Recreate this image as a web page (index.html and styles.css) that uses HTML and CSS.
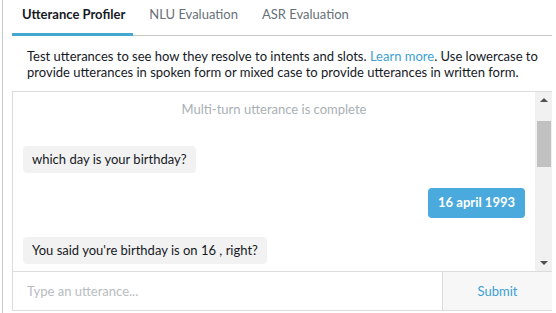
FILE: index.html
```html
<!DOCTYPE html>
<html lang="en">
<head>
    <meta charset="UTF-8">
    <title>Utterance Profiler</title>
    <link rel="stylesheet" href="styles.css">
</head>
<body>
    <div class="page">
        <div class="tabs">
            <div class="tab active">Utterance Profiler</div>
            <div class="tab">NLU Evaluation</div>
            <div class="tab">ASR Evaluation</div>
        </div>
        <p class="intro">Test utterances to see how they resolve to intents and slots. <a href="#">Learn more</a>. Use lowercase to provide utterances in spoken form or mixed case to provide utterances in written form.</p>
        <div class="chat">
            <div class="messages">
                <div class="list">
                    <div class="notice">Multi-turn utterance is complete</div>
                    <div class="bubble alexa">which day is your birthday?</div>
                    <div class="bubble user">16 april 1993</div>
                    <div class="bubble alexa">You said you're birthday is on 16 , right?</div>
                </div>
                <div class="scrollbar">
                    <div class="arrow up"></div>
                    <div class="thumb"></div>
                    <div class="spacer"></div>
                    <div class="arrow down"></div>
                </div>
            </div>
            <div class="entry">
                <input class="utterance" type="text" placeholder="Type an utterance...">
                <button class="submit" type="button">Submit</button>
            </div>
        </div>
    </div>
</body>
</html>
```

FILE: styles.css
```css
body {
    margin: 0;
    font-family: Lato, sans-serif;
    font-size: 13px;
    color: #16191f;
    background: #fff;
}
.page {
    margin-left: 2px;
    border-left: 1px solid #c8c8c8;
    height: 313px;
    padding: 0 4px 0 9px;
    box-sizing: border-box;
}
.tabs {
    display: flex;
    height: 35px;
    border-bottom: 1px solid #c6c6c6;
}
.tab {
    padding: 0 8px 0 10px;
    line-height: 29px;
    color: #687078;
    margin-right: 6px;
}
.tab.active {
    color: #16191f;
    font-weight: bold;
    border-bottom: 3px solid #44a6d3;
    margin-bottom: -1px;
}
.intro {
    margin: 12px 0 0;
    padding: 0 8px 0 15px;
    line-height: 16px;
}
.intro a {
    color: #3d9fd4;
    text-decoration: none;
}
.chat {
    margin-top: 11px;
    border: 1px solid #dcdcdc;
    border-right: none;
}
.messages {
    display: flex;
    height: 179px;
    overflow: hidden;
}
.list {
    flex: 1;
    display: flex;
    flex-direction: column;
    padding: 0 10px;
}
.notice {
    text-align: center;
    color: #aab0b5;
    line-height: 16px;
    padding-top: 9px;
    margin-bottom: 29px;
}
.bubble {
    padding: 6px 9px;
    line-height: 15px;
    border-radius: 4px;
    background: #f2f2f2;
    align-self: flex-start;
}
.bubble.user {
    align-self: flex-end;
    background: #4aaade;
    color: #fff;
    font-weight: bold;
    padding: 7px 10px 8px;
    margin: 15px 0 19px;
}
.scrollbar {
    width: 17px;
    background: #f1f1f1;
    display: flex;
    flex-direction: column;
    align-items: center;
}
.arrow {
    width: 0;
    height: 0;
    border-left: 4px solid transparent;
    border-right: 4px solid transparent;
    margin: 6px 0;
}
.arrow.up {
    border-bottom: 4px solid #505050;
}
.arrow.down {
    border-top: 4px solid #505050;
}
.thumb {
    width: 14px;
    height: 46px;
    margin-top: 13px;
    background: #c1c1c1;
}
.spacer {
    flex: 1;
}
.entry {
    display: flex;
    height: 38px;
    border-top: 1px solid #dcdcdc;
}
.utterance {
    flex: 1;
    border: none;
    outline: none;
    padding: 0 14px;
    font-family: inherit;
    font-size: 13px;
    color: #16191f;
}
.utterance::placeholder {
    color: #b7bcc0;
}
.submit {
    width: 110px;
    border: none;
    border-left: 1px solid #dcdcdc;
    background: #f7f7f7;
    color: #3d9fd4;
    font-family: inherit;
    font-size: 13px;
}
```
